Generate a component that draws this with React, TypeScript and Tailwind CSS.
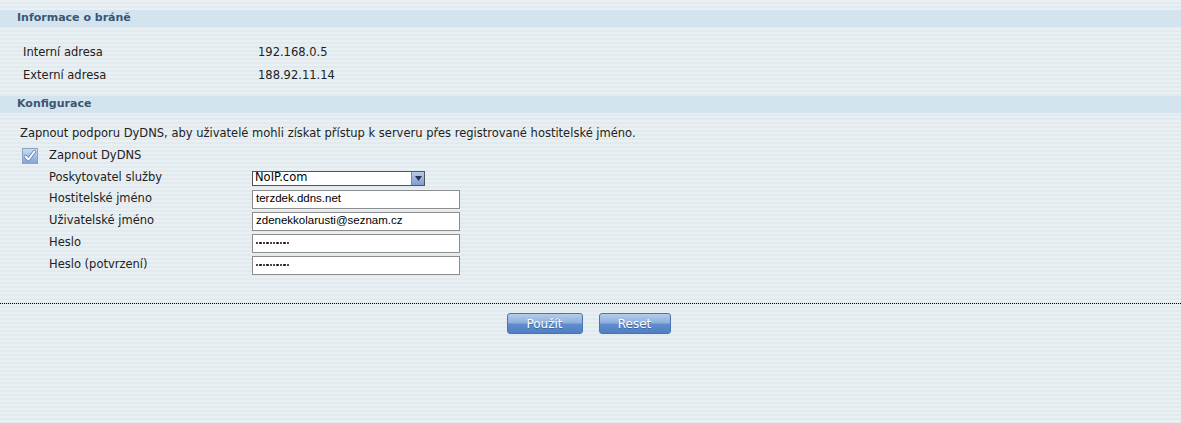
import React from "react";

const stripes =
  "bg-[repeating-linear-gradient(to_bottom,#e9f0f3_0px,#e9f0f3_2px,#e2eaee_2px,#e2eaee_4px)]";

function SectionHeader({ title }: { title: string }) {
  return (
    <div className="flex h-[17px] items-center bg-[#d4e4ef] pl-[17px] text-[11px] font-bold text-[#3b5672]">
      {title}
    </div>
  );
}

function InfoRow({ label, value }: { label: string; value: string }) {
  return (
    <div className="flex h-[23px] items-center pl-[23px] text-[11.5px] text-[#222]">
      <span className="w-[235px]">{label}</span>
      <span>{value}</span>
    </div>
  );
}

function FieldRow({ label, children }: { label: string; children: React.ReactNode }) {
  return (
    <div className="flex h-[22px] items-center pl-[49px] text-[11.5px] text-[#222]">
      <span className="w-[203px]">{label}</span>
      {children}
    </div>
  );
}

function Dots() {
  return (
    <span className="flex gap-[1px]">
      {Array.from({ length: 10 }).map((_, i) => (
        <span key={i} className="h-[2.4px] w-[2.4px] rounded-full bg-[#111]" />
      ))}
    </span>
  );
}

function TextBox({ value, secret }: { value: string; secret?: boolean }) {
  return (
    <div className="flex h-[19px] w-[208px] items-center border border-[#8d8d8d] bg-white pl-[3px] font-['Liberation_Sans',Arial,sans-serif] text-[11.5px] text-black">
      {secret ? <Dots /> : value}
    </div>
  );
}

function Checkbox() {
  return (
    <svg width="16" height="16" viewBox="0 0 16 16" className="ml-[22px]">
      <defs>
        <linearGradient id="cb" x1="0" y1="0" x2="0" y2="1">
          <stop offset="0" stopColor="#cddcf0" />
          <stop offset="1" stopColor="#86a3d0" />
        </linearGradient>
      </defs>
      <rect x="0.5" y="0.5" width="15" height="15" fill="url(#cb)" stroke="#8aa3c7" />
      <path d="M3.5 8.5 L6.5 11.5 L12.5 3.5" fill="none" stroke="#4f7ab6" strokeWidth="3.4" strokeLinecap="round" strokeLinejoin="round" />
      <path d="M3.5 8.5 L6.5 11.5 L12.5 3.5" fill="none" stroke="#ffffff" strokeWidth="2" strokeLinecap="round" strokeLinejoin="round" />
    </svg>
  );
}

function Select({ value }: { value: string }) {
  return (
    <div className="flex h-[15px] w-[173px] items-center border border-[#555] bg-white">
      <span className="flex-1 pl-[2px] text-[11.5px] leading-none text-black">{value}</span>
      <span className="flex h-[13px] w-[13px] items-center justify-center border-l border-[#6f8dc0] bg-[linear-gradient(to_bottom,#b7c9e6,#7f9ed2)]">
        <svg width="7" height="5" viewBox="0 0 7 5">
          <path d="M0 0 H7 L3.5 5 Z" fill="#24345a" />
        </svg>
      </span>
    </div>
  );
}

function Btn({ label, w }: { label: string; w: string }) {
  return (
    <button
      className={`${w} h-[21px] rounded-[3px] border border-[#4b74ad] bg-[linear-gradient(to_bottom,#b6cdec_0%,#8fb0de_45%,#5f8dcc_55%,#4f7fc3_100%)] font-['DejaVu_Sans',Verdana,sans-serif] text-[12px] text-white [text-shadow:0_1px_0_#3d679f]`}
    >
      {label}
    </button>
  );
}

export default function App() {
  return (
    <div className={`min-h-[423px] w-full ${stripes} pt-[10px] font-['DejaVu_Sans',Verdana,sans-serif]`}>
      <SectionHeader title="Informace o bráně" />
      <div className="pt-[14px]">
        <InfoRow label="Interní adresa" value="192.168.0.5" />
        <InfoRow label="Externí adresa" value="188.92.11.14" />
      </div>

      <div className="mt-[9px]">
        <SectionHeader title="Konfigurace" />
      </div>

      <div className="mt-[12px] flex h-[18px] items-center pl-[20px] text-[11.5px] text-[#222]">
        Zapnout podporu DyDNS, aby uživatelé mohli získat přístup k serveru přes registrované hostitelské jméno.
      </div>

      <div className="mt-[3px] flex h-[20px] items-center text-[11.5px] text-[#222]">
        <Checkbox />
        <span className="ml-[11px]">Zapnout DyDNS</span>
      </div>

      <div className="mt-[1px]">
        <FieldRow label="Poskytovatel služby">
          <Select value="NoIP.com" />
        </FieldRow>
      </div>
      <div className="-mt-[1px]">
        <FieldRow label="Hostitelské jméno">
          <TextBox value="terzdek.ddns.net" />
        </FieldRow>
        <FieldRow label="Uživatelské jméno">
          <TextBox value="zdenekkolarusti@seznam.cz" />
        </FieldRow>
        <FieldRow label="Heslo">
          <TextBox value="••••••••••" secret />
        </FieldRow>
        <FieldRow label="Heslo (potvrzení)">
          <TextBox value="••••••••••" secret />
        </FieldRow>
      </div>

      <div className="mt-[27px] border-t border-dotted border-black" />

      <div className="mt-[9px] flex justify-center gap-[16px] pr-[4px]">
        <Btn label="Použít" w="w-[76px]" />
        <Btn label="Reset" w="w-[72px]" />
      </div>
    </div>
  );
}
